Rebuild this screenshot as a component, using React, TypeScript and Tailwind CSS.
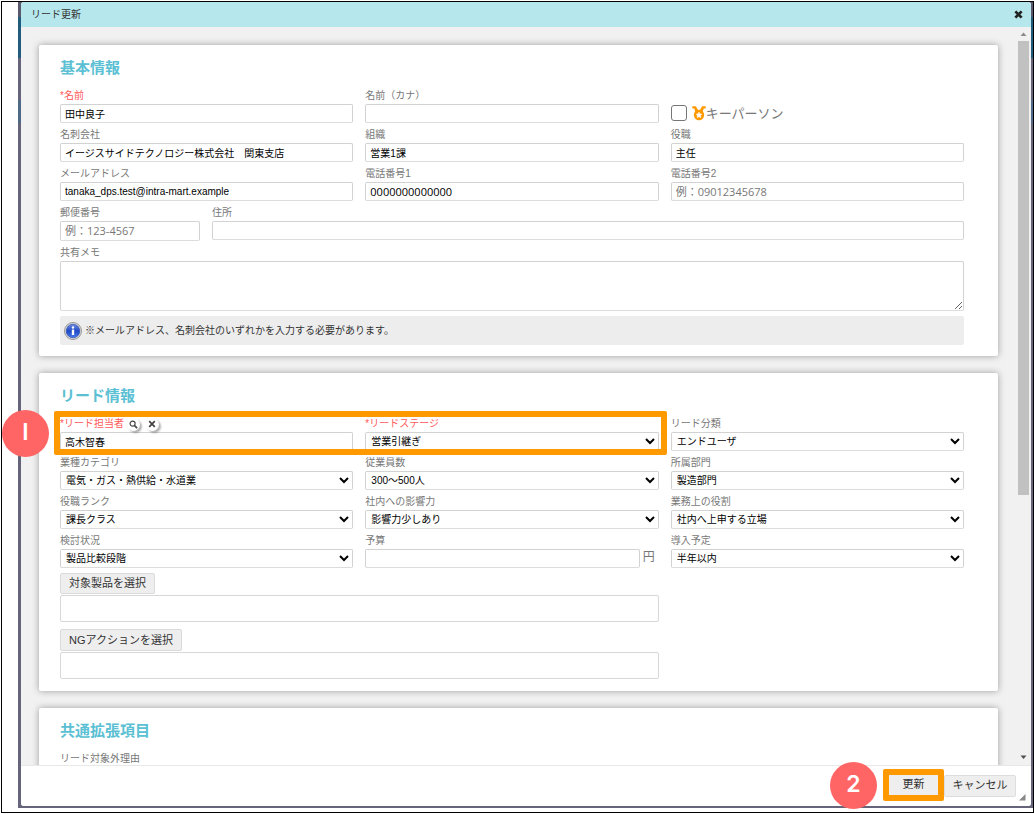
import type { ReactNode } from 'react';

const control =
  'w-full rounded-[2px] border border-[#d2d2d2] border-b-[#dcdcdc] bg-white text-black';

function Label({ id, text, required, children }: { id: string; text: string; required?: boolean; children?: ReactNode }) {
  return (
    <div className="flex h-[18px] items-center pt-0.5">
      <label htmlFor={id} className={required ? 'text-[#ff5a5a]' : 'text-[#777]'}>
        {required ? '*' : ''}
        {text}
      </label>
      {children}
    </div>
  );
}

type FieldProps = {
  id: string;
  text: string;
  value?: string;
  placeholder?: string;
  required?: boolean;
  children?: ReactNode;
};

function TextField({ id, text, value, placeholder, required, children }: FieldProps) {
  return (
    <div className="min-w-0">
      <Label id={id} text={text} required={required}>
        {children}
      </Label>
      <input
        id={id}
        type="text"
        defaultValue={value}
        placeholder={placeholder}
        className={`${control} block h-[19px] px-1 placeholder:text-[11px] placeholder:text-[#777]`}
      />
    </div>
  );
}

function SelectField({ id, text, value, required }: FieldProps) {
  return (
    <div className="min-w-0">
      <Label id={id} text={text} required={required} />
      <select id={id} className={`${control} block h-[19px] pl-px`}>
        <option>{value}</option>
      </select>
    </div>
  );
}

function Card({ title, children }: { title: string; children: ReactNode }) {
  return (
    <section className="rounded-[2px] bg-white pr-[34px] pb-[11px] pl-[21px] shadow-[0_0_7px_rgba(0,0,0,0.35)]">
      <h2 className="flex h-[41px] items-center pt-[3px] text-[15px] font-bold text-[#5bc0d3]">{title}</h2>
      {children}
    </section>
  );
}

function MedalIcon() {
  return (
    <svg viewBox="0 0 14 16" className="h-4 w-3.5" aria-hidden="true">
      <path d="M.3 1.200h3.500l2.600 4.200-2.700 2-1.500-3.900H.3z" fill="#ff9900" />
      <path d="M13.700 1.200h-3.500L7.600 5.400l2.700 2 1.500-3.900h1.900z" fill="#ff9900" />
      <circle cx="7" cy="10" r="5.200" fill="#ff9900" />
      <path
        d="M7 7.200l.9 1.700 1.900.3-1.300 1.400.3 1.900L7 11.700l-1.800.8.3-1.900-1.300-1.400 1.900-.3z"
        fill="#fff"
        stroke="#fff"
        strokeWidth="0.600"
      />
    </svg>
  );
}

function InfoIcon() {
  return (
    <svg viewBox="0 0 18 18" className="size-[18px] shrink-0" aria-hidden="true">
      <defs>
        <linearGradient id="info-fill" x1="0" y1="0" x2="0" y2="1">
          <stop offset="0" stopColor="#6d8ce6" />
          <stop offset="0.5" stopColor="#2149c4" />
          <stop offset="1" stopColor="#4a7bf0" />
        </linearGradient>
      </defs>
      <circle cx="9" cy="9" r="8.500" fill="#d8d8d8" stroke="#9a9a9a" />
      <circle cx="9" cy="9" r="6.800" fill="url(#info-fill)" stroke="#2a48a8" strokeWidth="0.600" />
      <circle cx="9" cy="5.500" r="1.200" fill="#fff" />
      <path d="M7.800 7.600h2.400v5.400H7.800z" fill="#fff" />
    </svg>
  );
}

const roundButton =
  'flex size-[13px] items-center justify-center rounded-full bg-white shadow-[2px_2px_2px_rgba(0,0,0,0.3)]';

export default function App() {
  return (
    <div className="h-screen bg-white pt-px pb-px pl-px font-['Liberation_Sans','Noto_Sans_CJK_JP',sans-serif] text-[10px] leading-none text-[#333]">
      <div className="relative h-full border border-black pb-1 pl-4">
        <div className="h-full bg-[linear-gradient(#5a586c_0_15px,#215c7c_15px_56px,#66647a_56px_98px,#4f6a86_98px_121px,#66647a_121px)] pr-0.5 pb-0.5 pl-[3px]">
          <div className="flex h-full flex-col rounded-[3px] bg-white">
            <header className="flex h-[25px] shrink-0 items-center justify-between rounded-t-[3px] bg-[#b5e7ec] pr-2 pl-2.5">
              <h1 className="text-[10px] text-[#333]">リード更新</h1>
              <button type="button" aria-label="閉じる">
                <svg viewBox="0 0 10 10" className="size-[9px]" aria-hidden="true">
                  <path d="M1.500 1.500l7 7M8.500 1.500l-7 7" stroke="#222" strokeWidth="3" />
                </svg>
              </button>
            </header>

            <div className="flex min-h-0 flex-1 bg-[#f1f1f1]">
              <main className="flex min-w-0 flex-1 flex-col gap-[17px] overflow-y-auto pt-[18px] pr-5 pl-[18px] [scrollbar-width:none]">
                <Card title="基本情報">
                  <div className="flex flex-col gap-0.5">
                    <div className="grid grid-cols-3 gap-x-3 gap-y-0.5">
                      <TextField id="name" text="名前" value="田中良子" required />
                      <TextField id="kana" text="名前（カナ）" />
                      <div className="flex items-end">
                        <div className="flex h-5 items-center">
                          <input
                            id="key"
                            type="checkbox"
                            className="size-4 appearance-none rounded-[3px] border border-[#767676] bg-white checked:bg-[#ff9900]"
                          />
                          <label htmlFor="key" className="ml-[5px] flex items-center text-[13px] text-[#777]">
                            <MedalIcon />
                            キーパーソン
                          </label>
                        </div>
                      </div>
                      <TextField id="company" text="名刺会社" value="イージスサイドテクノロジー株式会社　関東支店" />
                      <TextField id="org" text="組織" value="営業1課" />
                      <TextField id="post" text="役職" value="主任" />
                      <TextField id="mail" text="メールアドレス" value="tanaka_dps.test@intra-mart.example" />
                      <div className="[&_input]:font-['Open_Sans'] [&_input]:text-[11px]">
                        <TextField id="tel1" text="電話番号1" value="0000000000000" />
                      </div>
                      <div className="[&_input]:font-['Open_Sans','Noto_Sans_CJK_JP']">
                        <TextField id="tel2" text="電話番号2" placeholder="例：09012345678" />
                      </div>
                    </div>
                    <div className="flex gap-3">
                      <div className="w-[140px] shrink-0 [&_input]:h-5 [&_input]:font-['Open_Sans','Noto_Sans_CJK_JP']">
                        <TextField id="zip" text="郵便番号" placeholder="例：123-4567" />
                      </div>
                      <div className="min-w-0 flex-1">
                        <TextField id="address" text="住所" />
                      </div>
                    </div>
                    <div>
                      <Label id="memo" text="共有メモ" />
                      <textarea id="memo" className={`${control} block h-[50px] resize-y p-1`} />
                    </div>
                  </div>
                  <p className="mt-[5px] flex h-[29px] items-center gap-[3px] rounded-[2px] bg-[#ededed] pl-1 text-[#333]">
                    <InfoIcon />
                    ※メールアドレス、名刺会社のいずれかを入力する必要があります。
                  </p>
                </Card>

                <Card title="リード情報">
                  <div className="relative">
                    <div className="grid grid-cols-3 gap-x-3 gap-y-0.5">
                      <TextField id="owner" text="リード担当者" value="高木智春" required>
                        <span className="ml-[3px] flex gap-1.5">
                          <button type="button" aria-label="検索" className={roundButton}>
                            <svg viewBox="0 0 10 10" className="size-[9px]" fill="none" stroke="#444" aria-hidden="true">
                              <circle cx="4" cy="4" r="2.800" strokeWidth="1.300" />
                              <path d="M6.200 6.200L9 9" strokeWidth="1.800" />
                            </svg>
                          </button>
                          <button type="button" aria-label="クリア" className={roundButton}>
                            <svg viewBox="0 0 10 10" className="size-2" aria-hidden="true">
                              <path d="M1.500 1.500l7 7M8.500 1.500l-7 7" stroke="#444" strokeWidth="2.200" />
                            </svg>
                          </button>
                        </span>
                      </TextField>
                      <SelectField id="stage" text="リードステージ" value="営業引継ぎ" required />
                      <SelectField id="kind" text="リード分類" value="エンドユーザ" />
                      <SelectField id="industry" text="業種カテゴリ" value="電気・ガス・熱供給・水道業" />
                      <SelectField id="staff" text="従業員数" value="300～500人" />
                      <SelectField id="dept" text="所属部門" value="製造部門" />
                      <SelectField id="rank" text="役職ランク" value="課長クラス" />
                      <SelectField id="influence" text="社内への影響力" value="影響力少しあり" />
                      <SelectField id="role" text="業務上の役割" value="社内へ上申する立場" />
                      <SelectField id="status" text="検討状況" value="製品比較段階" />
                      <div className="flex items-end gap-[3px]">
                        <div className="min-w-0 flex-1">
                          <TextField id="budget" text="予算" />
                        </div>
                        <label htmlFor="budget" className="flex h-[22px] w-4 items-center text-[12px] text-[#777]">
                          円
                        </label>
                      </div>
                      <SelectField id="plan" text="導入予定" value="半年以内" />
                    </div>
                    <div className="pointer-events-none absolute -top-[3px] -left-1.5 h-11 w-[calc(66.667%+10px)] rounded-[2px] border-[6px] border-[#ff9900]" />
                  </div>
                  <div className="mt-[5px] w-[calc(66.667%-4px)] pb-px">
                    <button type="button" className="block h-[21px] rounded-[2px] border border-[#dadada] bg-[#eee] px-2 text-[11px]">
                      対象製品を選択
                    </button>
                    <div className="mt-px h-[27px] rounded-[2px] border border-[#d8d8d8]" />
                    <button type="button" className="mt-[7px] block h-[22px] rounded-[2px] border border-[#dadada] bg-[#eee] px-2 text-[11px]">
                      NGアクションを選択
                    </button>
                    <div className="mt-px h-[27px] rounded-[2px] border border-[#d8d8d8]" />
                  </div>
                </Card>

                <Card title="共通拡張項目">
                  <TextField id="reason" text="リード対象外理由" />
                </Card>
              </main>

              <div className="mr-0.5 flex w-[11px] shrink-0 flex-col items-center bg-[#f1f1f1]" aria-hidden="true">
                <svg viewBox="0 0 11 14" className="h-3.5 w-[11px]">
                  <path d="M2.500 9L5.500 5.500 8.500 9z" fill="#8a8a8a" />
                </svg>
                <div className="min-h-0 w-full flex-1">
                  <div className="h-[64%] w-full bg-[#c1c1c1]" />
                </div>
                <svg viewBox="0 0 11 14" className="h-3.5 w-[11px]">
                  <path d="M2.500 4.500L5.500 8 8.500 4.500z" fill="#505050" />
                </svg>
              </div>
            </div>

            <footer className="relative flex h-[41px] shrink-0 items-center justify-end rounded-b-[3px] border-t border-[#e8e8e8] bg-white pr-[15px] pb-px">
              <span className="mr-1.5 flex size-[47px] items-center justify-center rounded-full bg-[#ff6565] pb-0.5 font-['Inter'] text-[23px] font-semibold text-white">
                2
              </span>
              <span className="mb-0.5 rounded-[2px] border-[6px] border-[#ff9900]">
                <button type="button" className="block h-5 w-[49px] bg-[#eee] text-[11px]">
                  更新
                </button>
              </span>
              <button type="button" className="h-[22px] w-[72px] rounded-[2px] border border-[#ddd] bg-[#eee] text-[11px]">
                キャンセル
              </button>
              <svg viewBox="0 0 7 7" className="absolute right-[5px] bottom-[5px] size-[7px]" aria-hidden="true">
                <path d="M0 6.500L6.500 0v6.500z" fill="#888" />
              </svg>
            </footer>
          </div>
        </div>
        <span className="absolute top-[408px] left-0 flex size-[47px] items-center justify-center rounded-full bg-[#ff6565] pb-0.5 font-['Inter'] text-[23px] font-semibold text-white">
          I
        </span>
      </div>
    </div>
  );
}
